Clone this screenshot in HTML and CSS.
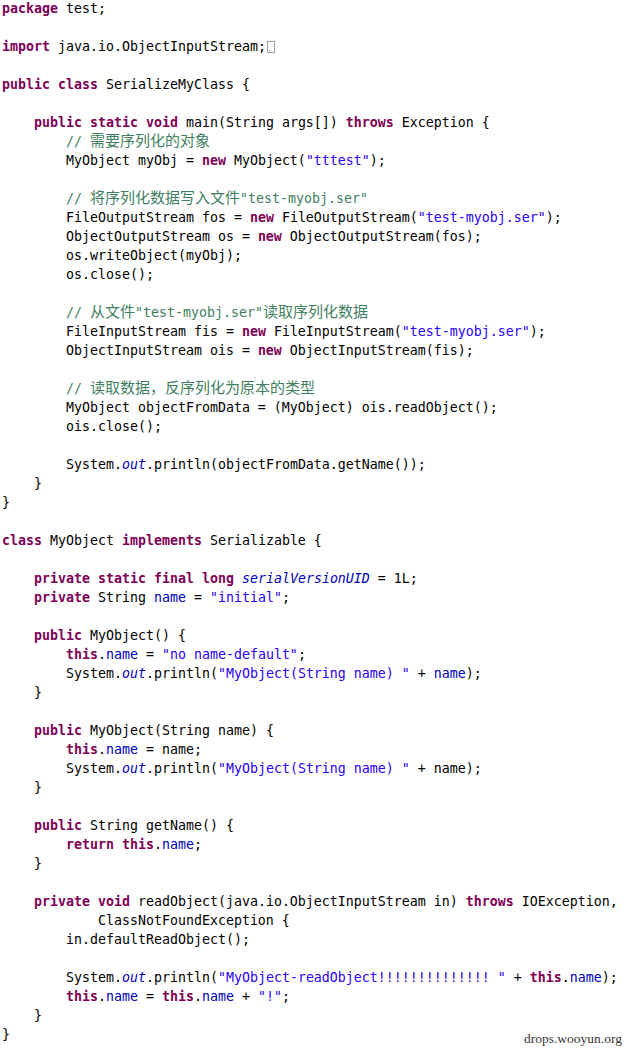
FILE: index.html
```html
<!DOCTYPE html>
<html>
<head>
<meta charset="utf-8">
<link rel="stylesheet" href="styles.css">
</head>
<body>
<div class="code">
<div class="ln"><span class="k">package</span> test;</div>
<div class="ln"></div>
<div class="ln"><span class="k">import</span> java.io.ObjectInputStream;<span class="fold"></span></div>
<div class="ln"></div>
<div class="ln"><span class="k">public</span> <span class="k">class</span> SerializeMyClass {</div>
<div class="ln"></div>
<div class="ln">    <span class="k">public</span> <span class="k">static</span> <span class="k">void</span> main(String args[]) <span class="k">throws</span> Exception {</div>
<div class="ln">        <span class="c">// <span class="cjk">需要序列化的对象</span></span></div>
<div class="ln">        MyObject myObj = <span class="k">new</span> MyObject(<span class="s">"tttest"</span>);</div>
<div class="ln"></div>
<div class="ln">        <span class="c">// <span class="cjk">将序列化数据写入文件</span>"test-myobj.ser"</span></div>
<div class="ln">        FileOutputStream fos = <span class="k">new</span> FileOutputStream(<span class="s">"test-myobj.ser"</span>);</div>
<div class="ln">        ObjectOutputStream os = <span class="k">new</span> ObjectOutputStream(fos);</div>
<div class="ln">        os.writeObject(myObj);</div>
<div class="ln">        os.close();</div>
<div class="ln"></div>
<div class="ln">        <span class="c">// <span class="cjk">从文件</span>"test-myobj.ser"<span class="cjk">读取序列化数据</span></span></div>
<div class="ln">        FileInputStream fis = <span class="k">new</span> FileInputStream(<span class="s">"test-myobj.ser"</span>);</div>
<div class="ln">        ObjectInputStream ois = <span class="k">new</span> ObjectInputStream(fis);</div>
<div class="ln"></div>
<div class="ln">        <span class="c">// <span class="cjk">读取数据，反序列化为原本的类型</span></span></div>
<div class="ln">        MyObject objectFromData = (MyObject) ois.readObject();</div>
<div class="ln">        ois.close();</div>
<div class="ln"></div>
<div class="ln">        System.<span class="sf">out</span>.println(objectFromData.getName());</div>
<div class="ln">    }</div>
<div class="ln">}</div>
<div class="ln"></div>
<div class="ln"><span class="k">class</span> MyObject <span class="k">implements</span> Serializable {</div>
<div class="ln"></div>
<div class="ln">    <span class="k">private</span> <span class="k">static</span> <span class="k">final</span> <span class="k">long</span> <span class="sf">serialVersionUID</span> = 1L;</div>
<div class="ln">    <span class="k">private</span> String <span class="f">name</span> = <span class="s">"initial"</span>;</div>
<div class="ln"></div>
<div class="ln">    <span class="k">public</span> MyObject() {</div>
<div class="ln">        <span class="k">this</span>.<span class="f">name</span> = <span class="s">"no name-default"</span>;</div>
<div class="ln">        System.<span class="sf">out</span>.println(<span class="s">"MyObject(String name) "</span> + <span class="f">name</span>);</div>
<div class="ln">    }</div>
<div class="ln"></div>
<div class="ln">    <span class="k">public</span> MyObject(String name) {</div>
<div class="ln">        <span class="k">this</span>.<span class="f">name</span> = name;</div>
<div class="ln">        System.<span class="sf">out</span>.println(<span class="s">"MyObject(String name) "</span> + name);</div>
<div class="ln">    }</div>
<div class="ln"></div>
<div class="ln">    <span class="k">public</span> String getName() {</div>
<div class="ln">        <span class="k">return</span> <span class="k">this</span>.<span class="f">name</span>;</div>
<div class="ln">    }</div>
<div class="ln"></div>
<div class="ln">    <span class="k">private</span> <span class="k">void</span> readObject(java.io.ObjectInputStream in) <span class="k">throws</span> IOException,</div>
<div class="ln">            ClassNotFoundException {</div>
<div class="ln">        in.defaultReadObject();</div>
<div class="ln"></div>
<div class="ln">        System.<span class="sf">out</span>.println(<span class="s">"MyObject-readObject!!!!!!!!!!!!!! "</span> + <span class="k">this</span>.<span class="f">name</span>);</div>
<div class="ln">        <span class="k">this</span>.<span class="f">name</span> = <span class="k">this</span>.<span class="f">name</span> + <span class="s">"!"</span>;</div>
<div class="ln">    }</div>
<div class="ln">}</div>
</div>
<div class="mark">drops.wooyun.org</div>
</body>
</html>
```
FILE: styles.css
```css
html, body {
  margin: 0;
  padding: 0;
  background: #ffffff;
}
body {
  position: relative;
  width: 627px;
  height: 1050px;
  overflow: hidden;
}
.code {
  padding: 0 0 0 2px;
  margin-top: -1px;
  font-family: "DejaVu Sans Mono", "Liberation Mono", monospace;
  font-size: 13.29px;
  color: #000000;
}
.ln {
  height: 19px;
  line-height: 19px;
  white-space: pre;
}
.k {
  color: #7f0055;
  font-weight: bold;
}
.s {
  color: #2a00ff;
}
.c {
  color: #3f7f5f;
}
.f {
  color: #0000c0;
}
.sf {
  color: #0000c0;
  font-style: italic;
}
.cjk {
  font-family: "Noto Sans CJK SC", sans-serif;
  font-size: 15px;
  line-height: 15px;
}
.fold {
  display: inline-block;
  position: relative;
  width: 8px;
  height: 12px;
  border: 1px solid #a0a0a0;
  margin-left: 1px;
  vertical-align: -2px;
  box-sizing: border-box;
}
.fold::after {
  content: "";
  position: absolute;
  left: 1px;
  bottom: 1px;
  width: 1px;
  height: 1px;
  background: #808080;
}
.mark {
  position: absolute;
  right: 5px;
  bottom: 3px;
  font-family: "Liberation Serif", serif;
  font-size: 13.5px;
  color: #333333;
}
```
